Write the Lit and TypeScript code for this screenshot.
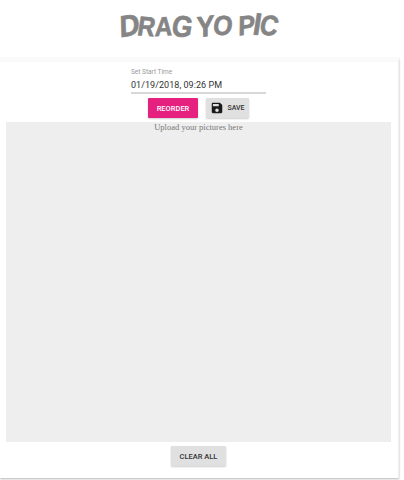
import {LitElement, css, html} from "lit";
import {customElement} from "lit/decorators.js";

// each logo letter is tilted a bit so the title reads hand drawn
const LOGO = [
    {c: "D", rot: -8, dy: 0, size: 1.08},
    {c: "R", rot: 4, dy: 1, size: 0.96},
    {c: "A", rot: -3, dy: 1, size: 0.96},
    {c: "G", rot: 5, dy: 1, size: 1.05},
    {c: " ", rot: 0, dy: 0, size: 0.7},
    {c: "Y", rot: -6, dy: 1, size: 1.05},
    {c: "O", rot: 6, dy: 0, size: 0.98},
    {c: " ", rot: 0, dy: 0, size: 0.5},
    {c: "P", rot: -5, dy: 0, size: 0.98},
    {c: "I", rot: 4, dy: -1, size: 1.1},
    {c: "C", rot: 8, dy: 0, size: 1},
];

@customElement("app-root")
export class AppRoot extends LitElement {
    render() {
        return html`
            <header class="header">
                <h1 class="logo">
                    ${LOGO.map(l => html`<span
                        class="letter"
                        style="transform: translateY(${l.dy}px) rotate(${l.rot}deg) scale(${l.size})"
                    >${l.c === " " ? html`&nbsp;` : l.c}</span>`)}
                </h1>
            </header>
            <main class="card">
                <div class="field">
                    <label class="field-label">Set Start Time</label>
                    <div class="field-value">01/19/2018, 09:26 PM</div>
                </div>
                <div class="actions">
                    <button class="btn primary reorder">REORDER</button>
                    <button class="btn save">
                        <svg viewBox="0 0 24 24" width="14" height="14">
                            <path fill="#1a1a1a" d="M17 3H5c-1.11 0-2 .9-2 2v14c0 1.1.89 2 2 2h14c1.1 0 2-.9 2-2V7l-4-4zm-5 16c-1.66 0-3-1.34-3-3s1.34-3 3-3 3 1.34 3 3-1.34 3-3 3zm3-10H5V5h10v4z"/>
                        </svg>
                        SAVE
                    </button>
                </div>
                <div class="dropzone">Upload your pictures here</div>
                <div class="footer">
                    <button class="btn clear">CLEAR ALL</button>
                </div>
            </main>
        `;
    }

    static styles = css`
      :host {
        display: block;
        width: 404px;
        height: 480px;
        background: #fff;
        font-family: Roboto, "Liberation Sans", sans-serif;
        overflow: hidden;
      }
      .header {
        height: 58px;
        display: flex;
        justify-content: center;
      }
      .logo {
        margin: 10px 0 0 -8px;
        font-family: "Liberation Sans", sans-serif;
        font-size: 28px;
        line-height: 32px;
        font-weight: 700;
        color: #858585;
        -webkit-text-stroke: 0.7px #858585;
        white-space: nowrap;
        transform: scaleX(0.9) skewX(-6deg);
      }
      .letter {
        display: inline-block;
        margin-right: -1px;
      }
      .card {
        width: 399px;
        height: 420px;
        box-sizing: border-box;
        padding-top: 6px;
        background: #fff;
        border-top: 4px solid #fafafa;
        border-right: 1px solid #efefef;
        box-shadow: 0 1px 2px rgba(0, 0, 0, 0.3);
        display: flex;
        flex-direction: column;
        align-items: center;
      }
      .field {
        width: 135px;
        height: 24px;
        margin-left: -1px;
        border-bottom: 2px solid #d8d8d8;
      }
      .field-label {
        display: block;
        font-size: 6.5px;
        line-height: 9px;
        color: #999;
      }
      .field-value {
        font-size: 9px;
        line-height: 15px;
        margin-top: 1px;
        letter-spacing: 0.05px;
        color: #333;
      }
      .actions {
        display: flex;
        gap: 8px;
        margin-top: 4px;
        margin-left: -1px;
      }
      .btn {
        border: none;
        height: 20px;
        padding: 0;
        border-radius: 1px;
        background: #e0e0e0;
        color: #333;
        font-family: inherit;
        font-size: 7.5px;
        font-weight: 500;
        box-shadow: 0 1px 2px rgba(0, 0, 0, 0.2);
        display: flex;
        align-items: center;
        justify-content: center;
      }
      .primary {
        background: #e6207f;
        color: #fff;
      }
      .reorder {
        width: 50px;
      }
      .save {
        width: 43px;
        gap: 3px;
        font-size: 7px;
      }
      .dropzone {
        width: 385px;
        height: 320px;
        margin-top: 4px;
        margin-left: -1px;
        box-sizing: border-box;
        background: #eeeeee;
        text-align: center;
        font-family: "Liberation Serif", serif;
        font-size: 8.5px;
        line-height: 10px;
        color: #777;
      }
      .footer {
        margin-top: 4px;
        margin-left: -1px;
      }
      .clear {
        width: 55px;
      }
    `;
}
